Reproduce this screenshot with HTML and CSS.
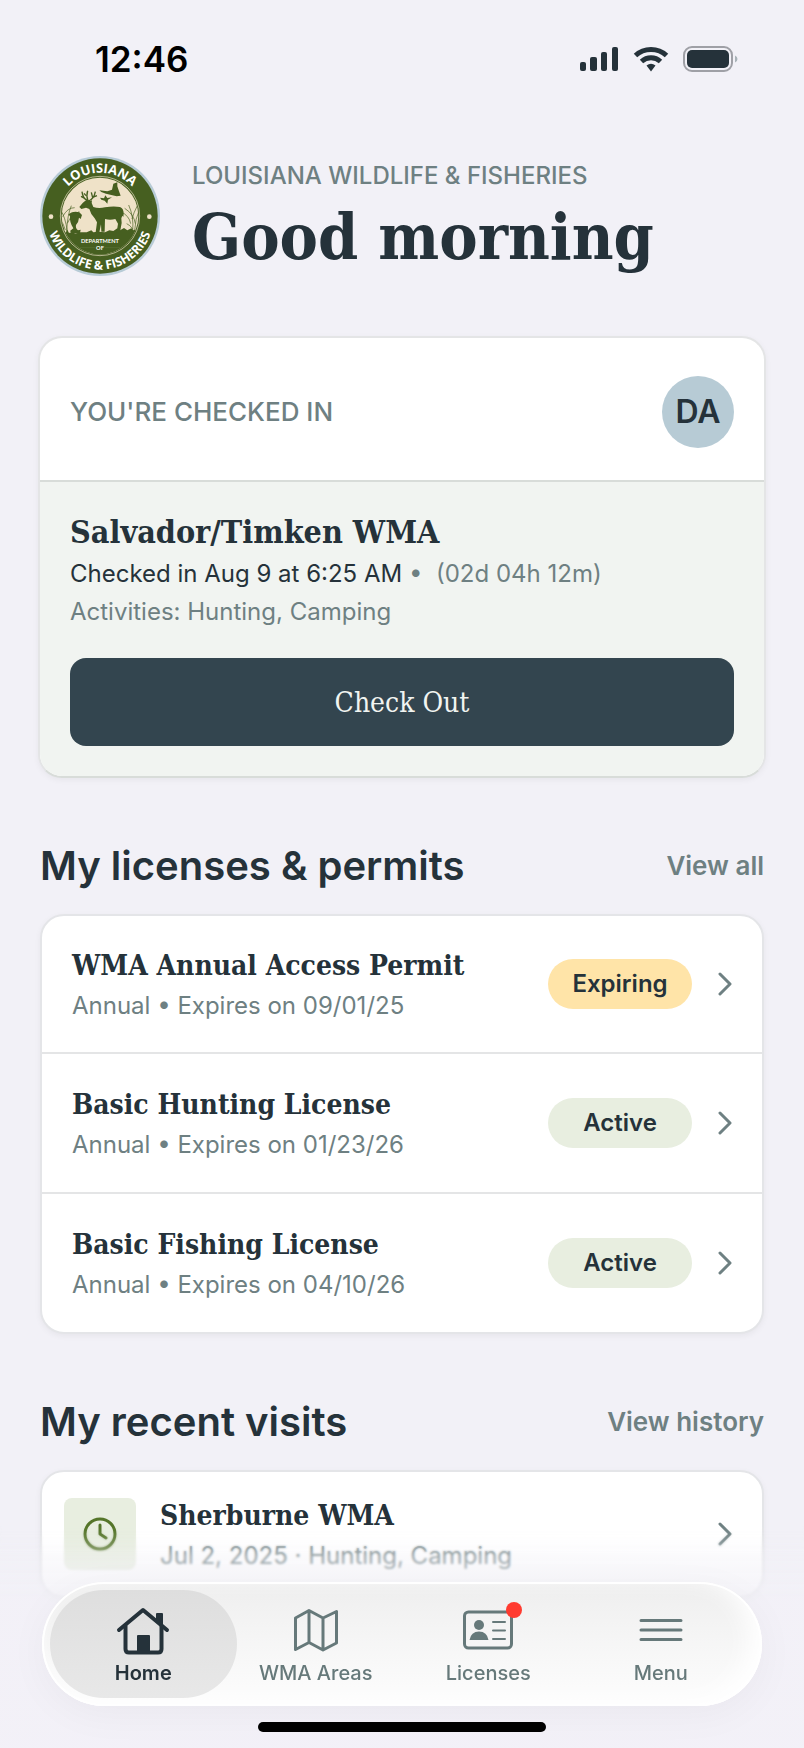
FILE: index.html
```html
<!DOCTYPE html>
<html lang="en">
<head>
    <meta charset="UTF-8">
    <meta name="viewport" content="width=device-width, initial-scale=1.0">
    <title>Louisiana Wildlife &amp; Fisheries</title>
    <link rel="stylesheet" href="styles.css">
</head>
<body>
    <div class="status-bar">
        <span class="time">12:46</span>
        <div class="status-icons">
            <svg width="40" height="26" viewBox="0 0 40 26" fill="#25323a">
                <rect x="1" y="16" width="6" height="9" rx="2"/>
                <rect x="11" y="11" width="7" height="14" rx="2"/>
                <rect x="22" y="6" width="6" height="19" rx="2"/>
                <rect x="33" y="1" width="6" height="24" rx="2"/>
            </svg>
            <svg width="36" height="26" viewBox="0 0 36 26" fill="none" stroke="#25323a" stroke-width="5">
                <path d="M2.500 9.500C11 1.400 25 1.400 33.500 9.500"/>
                <path d="M8.500 15.500C14 10.500 22 10.500 27.500 15.500"/>
                <path d="M13.500 19.500Q18 16 22.500 19.500L18 25.500Z" fill="#25323a" stroke="none"/>
            </svg>
            <svg width="56" height="26" viewBox="0 0 56 26">
                <rect x="1" y="1" width="48" height="24" rx="8" fill="none" stroke="#9fa0a6" stroke-width="2"/>
                <rect x="4" y="4" width="42" height="18" rx="5" fill="#25323a"/>
                <path d="M52 9.500Q54.500 10.500 54.500 13T52 16.500Z" fill="#a9b3b8"/>
            </svg>
        </div>
    </div>

    <main class="page">
        <header class="header">
            <svg class="logo" viewBox="30 33 360 360" role="img" aria-label="Louisiana Department of Wildlife and Fisheries">
                <defs>
                    <path id="arc-top" d="M80 213A130 130 0 0 1 340 213"/>
                    <path id="arc-bottom" d="M49 213A161 161 0 0 0 371 213"/>
                    <clipPath id="inner"><circle cx="210" cy="213" r="115"/></clipPath>
                </defs>
                <circle cx="210" cy="213" r="180" fill="#b7cbd6"/>
                <circle cx="210" cy="213" r="173" fill="#465f20"/>
                <circle cx="210" cy="213" r="119" fill="none" stroke="#efe2c8" stroke-width="2"/>
                <circle cx="210" cy="213" r="115" fill="#efe2c8"/>
                <g clip-path="url(#inner)" fill="#465f20">
                    <path d="M90 268L108 262L112 254L117 264L128 260L135 266L150 262L170 262L184 256L190 262L205 260L225 262L238 256L250 258L262 250L270 256L282 249L292 256L304 250L310 256L330 250V340H90Z"/>
                    <!-- deer -->
                    <path d="M148 186L158 174L164 169L172 164L180 168L186 166L185 174L190 186Q205 191 225 187Q250 182 270 186Q281 190 281 206L280 216L277 212L274 220L275 234L270 262H260L264 236L256 222Q240 226 225 222L224 260H214L213 238L208 262H197L201 232L194 220Q182 208 178 192L168 188L154 192Z"/>
                    <g fill="none" stroke="#465f20" stroke-width="4">
                        <path d="M173 168Q158 160 156 140M164 160L153 154M174 168Q168 152 173 137M176 168Q192 162 196 140M188 158L184 142M190 156L201 152M168 152L162 145"/>
                    </g>
                    <!-- fish -->
                    <path d="M126 202Q136 198 148 202L156 210L152 222L147 218Q146 232 138 240Q136 250 144 256L152 254L150 264L126 266L120 258L130 250Q118 232 120 214L115 208Z"/>
                    <!-- ducks -->
                    <path d="M208 136L232 139L246 134L250 116L262 112L262 124L266 136L272 152L260 154L244 150L228 146L214 141Z"/>
                    <path d="M210 158L222 160L226 151L232 159L246 157L234 164L232 176L224 167L214 164Z"/>
                    <g fill="none" stroke="#465f20" stroke-width="2">
                        <path d="M112 260Q106 215 92 196M110 260Q112 210 124 182M106 255Q100 235 92 225M112 235Q124 208 148 200M98 215Q112 188 134 188"/>
                        <path d="M308 258Q312 215 296 180M314 256Q316 220 328 195M302 236Q298 212 272 200M306 222Q310 205 322 182M316 236Q312 208 284 190M290 236Q300 240 308 252"/>
                    </g>
                </g>
                <path d="M196 308H150M224 308H270" stroke="#5b7137" stroke-width="2"/>
                <circle cx="63" cy="215" r="7" fill="#efe2c8"/>
                <circle cx="358" cy="215" r="7" fill="#efe2c8"/>
                <g class="logo-text" text-anchor="middle">
                    <text font-size="39"><textPath href="#arc-top" startOffset="50%">LOUISIANA</textPath></text>
                    <text font-size="37"><textPath href="#arc-bottom" startOffset="50%">WILDLIFE &amp; FISHERIES</textPath></text>
                    <text class="logo-small" x="210" y="294" font-size="17">DEPARTMENT</text>
                    <text class="logo-small" x="210" y="316" font-size="17">OF</text>
                </g>
            </svg>
            <div>
                <p class="agency">LOUISIANA WILDLIFE &amp; FISHERIES</p>
                <h1>Good morning</h1>
            </div>
        </header>

        <section class="checkin">
            <div class="checkin-top">
                <h2 class="checkin-label">YOU'RE CHECKED IN</h2>
                <span class="avatar">DA</span>
            </div>
            <div class="checkin-body">
                <h3 class="place">Salvador/Timken WMA</h3>
                <p class="checkin-time">Checked in Aug 9 at 6:25 AM <span class="muted">•&nbsp; (02d 04h 12m)</span></p>
                <p class="muted">Activities: Hunting, Camping</p>
                <button class="checkout-button">Check Out</button>
            </div>
        </section>

        <section>
            <div class="section-head">
                <h2>My licenses &amp; permits</h2>
                <a href="#">View all</a>
            </div>
            <ul class="list">
                <li>
                    <a class="row" href="#">
                        <div class="row-text">
                            <h3>WMA Annual Access Permit</h3>
                            <p>Annual • Expires on 09/01/25</p>
                        </div>
                        <span class="badge expiring">Expiring</span>
                        <svg class="chevron" viewBox="0 0 14 24"><path d="M2 2L12 12L2 22"/></svg>
                    </a>
                </li>
                <li>
                    <a class="row" href="#">
                        <div class="row-text">
                            <h3>Basic Hunting License</h3>
                            <p>Annual • Expires on 01/23/26</p>
                        </div>
                        <span class="badge">Active</span>
                        <svg class="chevron" viewBox="0 0 14 24"><path d="M2 2L12 12L2 22"/></svg>
                    </a>
                </li>
                <li>
                    <a class="row" href="#">
                        <div class="row-text">
                            <h3>Basic Fishing License</h3>
                            <p>Annual • Expires on 04/10/26</p>
                        </div>
                        <span class="badge">Active</span>
                        <svg class="chevron" viewBox="0 0 14 24"><path d="M2 2L12 12L2 22"/></svg>
                    </a>
                </li>
            </ul>
        </section>

        <section>
            <div class="section-head">
                <h2>My recent visits</h2>
                <a href="#">View history</a>
            </div>
            <ul class="list">
                <li>
                    <a class="row visit" href="#">
                        <span class="visit-icon">
                            <svg width="34" height="34" viewBox="0 0 34 34" fill="none" stroke="#55752a" stroke-width="3" stroke-linecap="round" stroke-linejoin="round">
                                <circle cx="17" cy="17" r="15"/>
                                <path d="M17 8V17L23 21"/>
                            </svg>
                        </span>
                        <div class="row-text">
                            <h3>Sherburne WMA</h3>
                            <p>Jul 2, 2025 · Hunting, Camping</p>
                        </div>
                        <svg class="chevron" viewBox="0 0 14 24"><path d="M2 2L12 12L2 22"/></svg>
                    </a>
                </li>
            </ul>
        </section>
    </main>

    <div class="bottom">
        <div class="fade"></div>
        <nav class="tab-bar">
            <a class="tab active" href="#">
                <svg width="54" height="50" viewBox="0 0 54 50" fill="none" stroke="#25323a" stroke-width="4" stroke-linecap="round" stroke-linejoin="round">
                    <path d="M3 24L27 4L51 24"/>
                    <path d="M9.500 20V43Q9.500 46.500 13 46.500H42Q45.500 46.500 45.500 43V20"/>
                    <path d="M41 8H46V18L41 14Z" fill="#25323a" stroke-width="2"/>
                    <path d="M22 30H33V46H22Z" fill="#25323a" stroke-width="2"/>
                </svg>
                Home
            </a>
            <a class="tab" href="#">
                <svg width="54" height="50" viewBox="0 0 54 50" fill="none" stroke="#66797a" stroke-width="3" stroke-linejoin="round">
                    <path d="M6.500 12L20 4.500L34 12L47.500 5.500V37L34 44L20 36.500L6.500 43.500ZM20 5V37M34 12V44"/>
                </svg>
                WMA Areas
            </a>
            <a class="tab" href="#">
                <span class="tab-icon">
                    <svg width="54" height="50" viewBox="0 0 54 50" fill="none" stroke="#66797a" stroke-width="3" stroke-linecap="round">
                        <rect x="3.500" y="6" width="47" height="36" rx="4"/>
                        <g fill="#66797a" stroke="none">
                            <circle cx="18" cy="19" r="5"/>
                            <path d="M8.500 34Q10 25.500 18 25.500T27.500 34Z"/>
                        </g>
                        <path d="M32 16H44M32 24.500H44M32 33H44" stroke-width="2"/>
                    </svg>
                    <span class="dot"></span>
                </span>
                Licenses
            </a>
            <a class="tab" href="#">
                <svg width="54" height="50" viewBox="0 0 54 50" fill="none" stroke="#66797a" stroke-width="3" stroke-linecap="round">
                    <path d="M7 14.500H47M7 24H47M7 33.500H47"/>
                </svg>
                Menu
            </a>
        </nav>
        <div class="home-indicator"></div>
    </div>
</body>
</html>
```
FILE: styles.css
```css
* {
    box-sizing: border-box;
}
body {
    margin: 0;
    min-height: 100vh;
    background-color: #f2f1f7;
    color: #25323a;
    font-family: Inter, "Liberation Sans", sans-serif;
    font-size: 24px;
    line-height: 38px;
}
h1, h2, h3, p, ul {
    margin: 0;
    padding: 0;
}
a {
    color: inherit;
    text-decoration: none;
}
h1, h3, .checkout-button {
    font-family: "DejaVu Serif Condensed", "DejaVu Serif", serif;
}
.muted {
    color: #6e8082;
}
.status-bar {
    display: flex;
    justify-content: space-between;
    align-items: center;
    height: 118px;
    padding: 0 65px 0 95px;
}
.time {
    color: #000;
    font-size: 35px;
    font-weight: 600;
}
.status-icons {
    display: flex;
    gap: 14px;
}
.page {
    padding: 38px 40px 0;
}

/* header */
.header {
    display: flex;
    align-items: center;
    gap: 32px;
    margin-bottom: 60px;
}
.logo {
    flex: none;
    width: 120px;
    height: 120px;
}
.logo-text {
    fill: #fff;
    font-family: "Open Sans", sans-serif;
    font-weight: 700;
}
.logo-small {
    font-family: Lato, sans-serif;
}
.agency {
    margin-bottom: 4px;
    color: #6e8082;
    font-weight: 500;
}
h1 {
    font-size: 64px;
    line-height: 76px;
}

/* check in card */
.checkin {
    margin: 0 -2px;
    overflow: hidden;
    background-color: #fff;
    border: 2px solid #e4e5e6;
    border-bottom-color: #d8dcd9;
    border-radius: 24px;
    box-shadow: 0 2px 6px rgba(0, 0, 0, 0.05);
}
.checkin-top {
    display: flex;
    justify-content: space-between;
    align-items: center;
    height: 142px;
    padding: 6px 30px 0;
}
.checkin-label {
    color: #6e8082;
    font-size: 26px;
    font-weight: 500;
}
.avatar {
    display: flex;
    align-items: center;
    justify-content: center;
    width: 72px;
    height: 72px;
    background-color: #b7cbd5;
    border-radius: 50%;
    font-size: 32px;
    font-weight: 600;
}
.checkin-body {
    padding: 30px;
    background-color: #f1f4f1;
    border-top: 2px solid #d8dcd9;
}
.place {
    margin-bottom: 3px;
    font-size: 32px;
    line-height: 40px;
}
.checkout-button {
    display: block;
    width: 100%;
    height: 88px;
    margin-top: 27px;
    background-color: #33454f;
    color: #f1f4f1;
    border: none;
    border-radius: 16px;
    font-size: 28px;
    cursor: pointer;
}

/* lists */
.section-head {
    display: flex;
    justify-content: space-between;
    align-items: center;
    margin: 64px 0 24px;
}
.section-head h2 {
    font-size: 40px;
    font-weight: 600;
    line-height: 48px;
}
.section-head a {
    color: #6e8082;
    font-size: 26px;
    font-weight: 600;
}
.list {
    list-style: none;
    background-color: #fff;
    border: 2px solid #e4e5e8;
    border-radius: 24px;
    box-shadow: 0 2px 6px rgba(0, 0, 0, 0.05);
}
.list li + li {
    border-top: 2px solid #e4e5e6;
}
.row {
    display: flex;
    align-items: center;
    height: 138px;
    padding: 0 30px;
}
.list li:first-child .row {
    height: 136px;
}
.row-text {
    flex: 1;
    padding-top: 3px;
}
.row h3 {
    margin-bottom: 1px;
    font-size: 28px;
    line-height: 40px;
}
.row p {
    color: #6e8082;
}
.badge {
    width: 144px;
    height: 50px;
    background-color: #e8eee0;
    border-radius: 25px;
    font-weight: 600;
    line-height: 50px;
    text-align: center;
}
.expiring {
    background-color: #ffe4a8;
}
.chevron {
    width: 14px;
    height: 24px;
    margin-left: 26px;
    fill: none;
    stroke: #6e8082;
    stroke-width: 3;
    stroke-linecap: round;
    stroke-linejoin: round;
}
.list li:first-child .visit {
    gap: 24px;
    height: 124px;
    padding-left: 22px;
}
.visit-icon {
    display: flex;
    align-items: center;
    justify-content: center;
    width: 72px;
    height: 72px;
    background-color: #e8eee0;
    border-radius: 8px;
}

/* tab bar, stays over the scrolling content */
.bottom {
    position: fixed;
    left: 0;
    right: 0;
    bottom: 0;
    padding: 56px 42px 16px;
}
.fade {
    position: absolute;
    inset: 0;
    background: linear-gradient(rgba(242, 241, 247, 0), rgba(242, 241, 247, 0.8) 70px);
    backdrop-filter: blur(1px);
    mask-image: linear-gradient(transparent, #000 30px);
}
.tab-bar {
    position: relative;
    display: grid;
    grid-template-columns: repeat(4, 1fr);
    height: 124px;
    padding: 8px 15px;
    background: linear-gradient(#eeeeee, #f6f6f6 50%, #fdfdfd);
    border-radius: 62px;
    box-shadow: inset 0 0 0 2px #fff, inset -12px -6px 24px #fff, 0 8px 40px rgba(0, 0, 0, 0.04);
}
.tab {
    display: flex;
    flex-direction: column;
    align-items: center;
    gap: 5px;
    margin: 0 -7px;
    padding-top: 16px;
    border-radius: 54px;
    color: #66797a;
    font-size: 20px;
    font-weight: 500;
    line-height: 24px;
}
.tab svg {
    display: block;
}
.active {
    background: linear-gradient(#dedede, #e8e8e8);
    color: #25323a;
    font-weight: 600;
}
.tab-icon {
    position: relative;
}
.dot {
    position: absolute;
    top: -4px;
    right: -7px;
    width: 16px;
    height: 16px;
    background-color: #ff3b30;
    border-radius: 50%;
}
.home-indicator {
    position: relative;
    width: 288px;
    height: 10px;
    margin: 16px auto 0;
    background-color: #000;
    border-radius: 5px;
}
```
